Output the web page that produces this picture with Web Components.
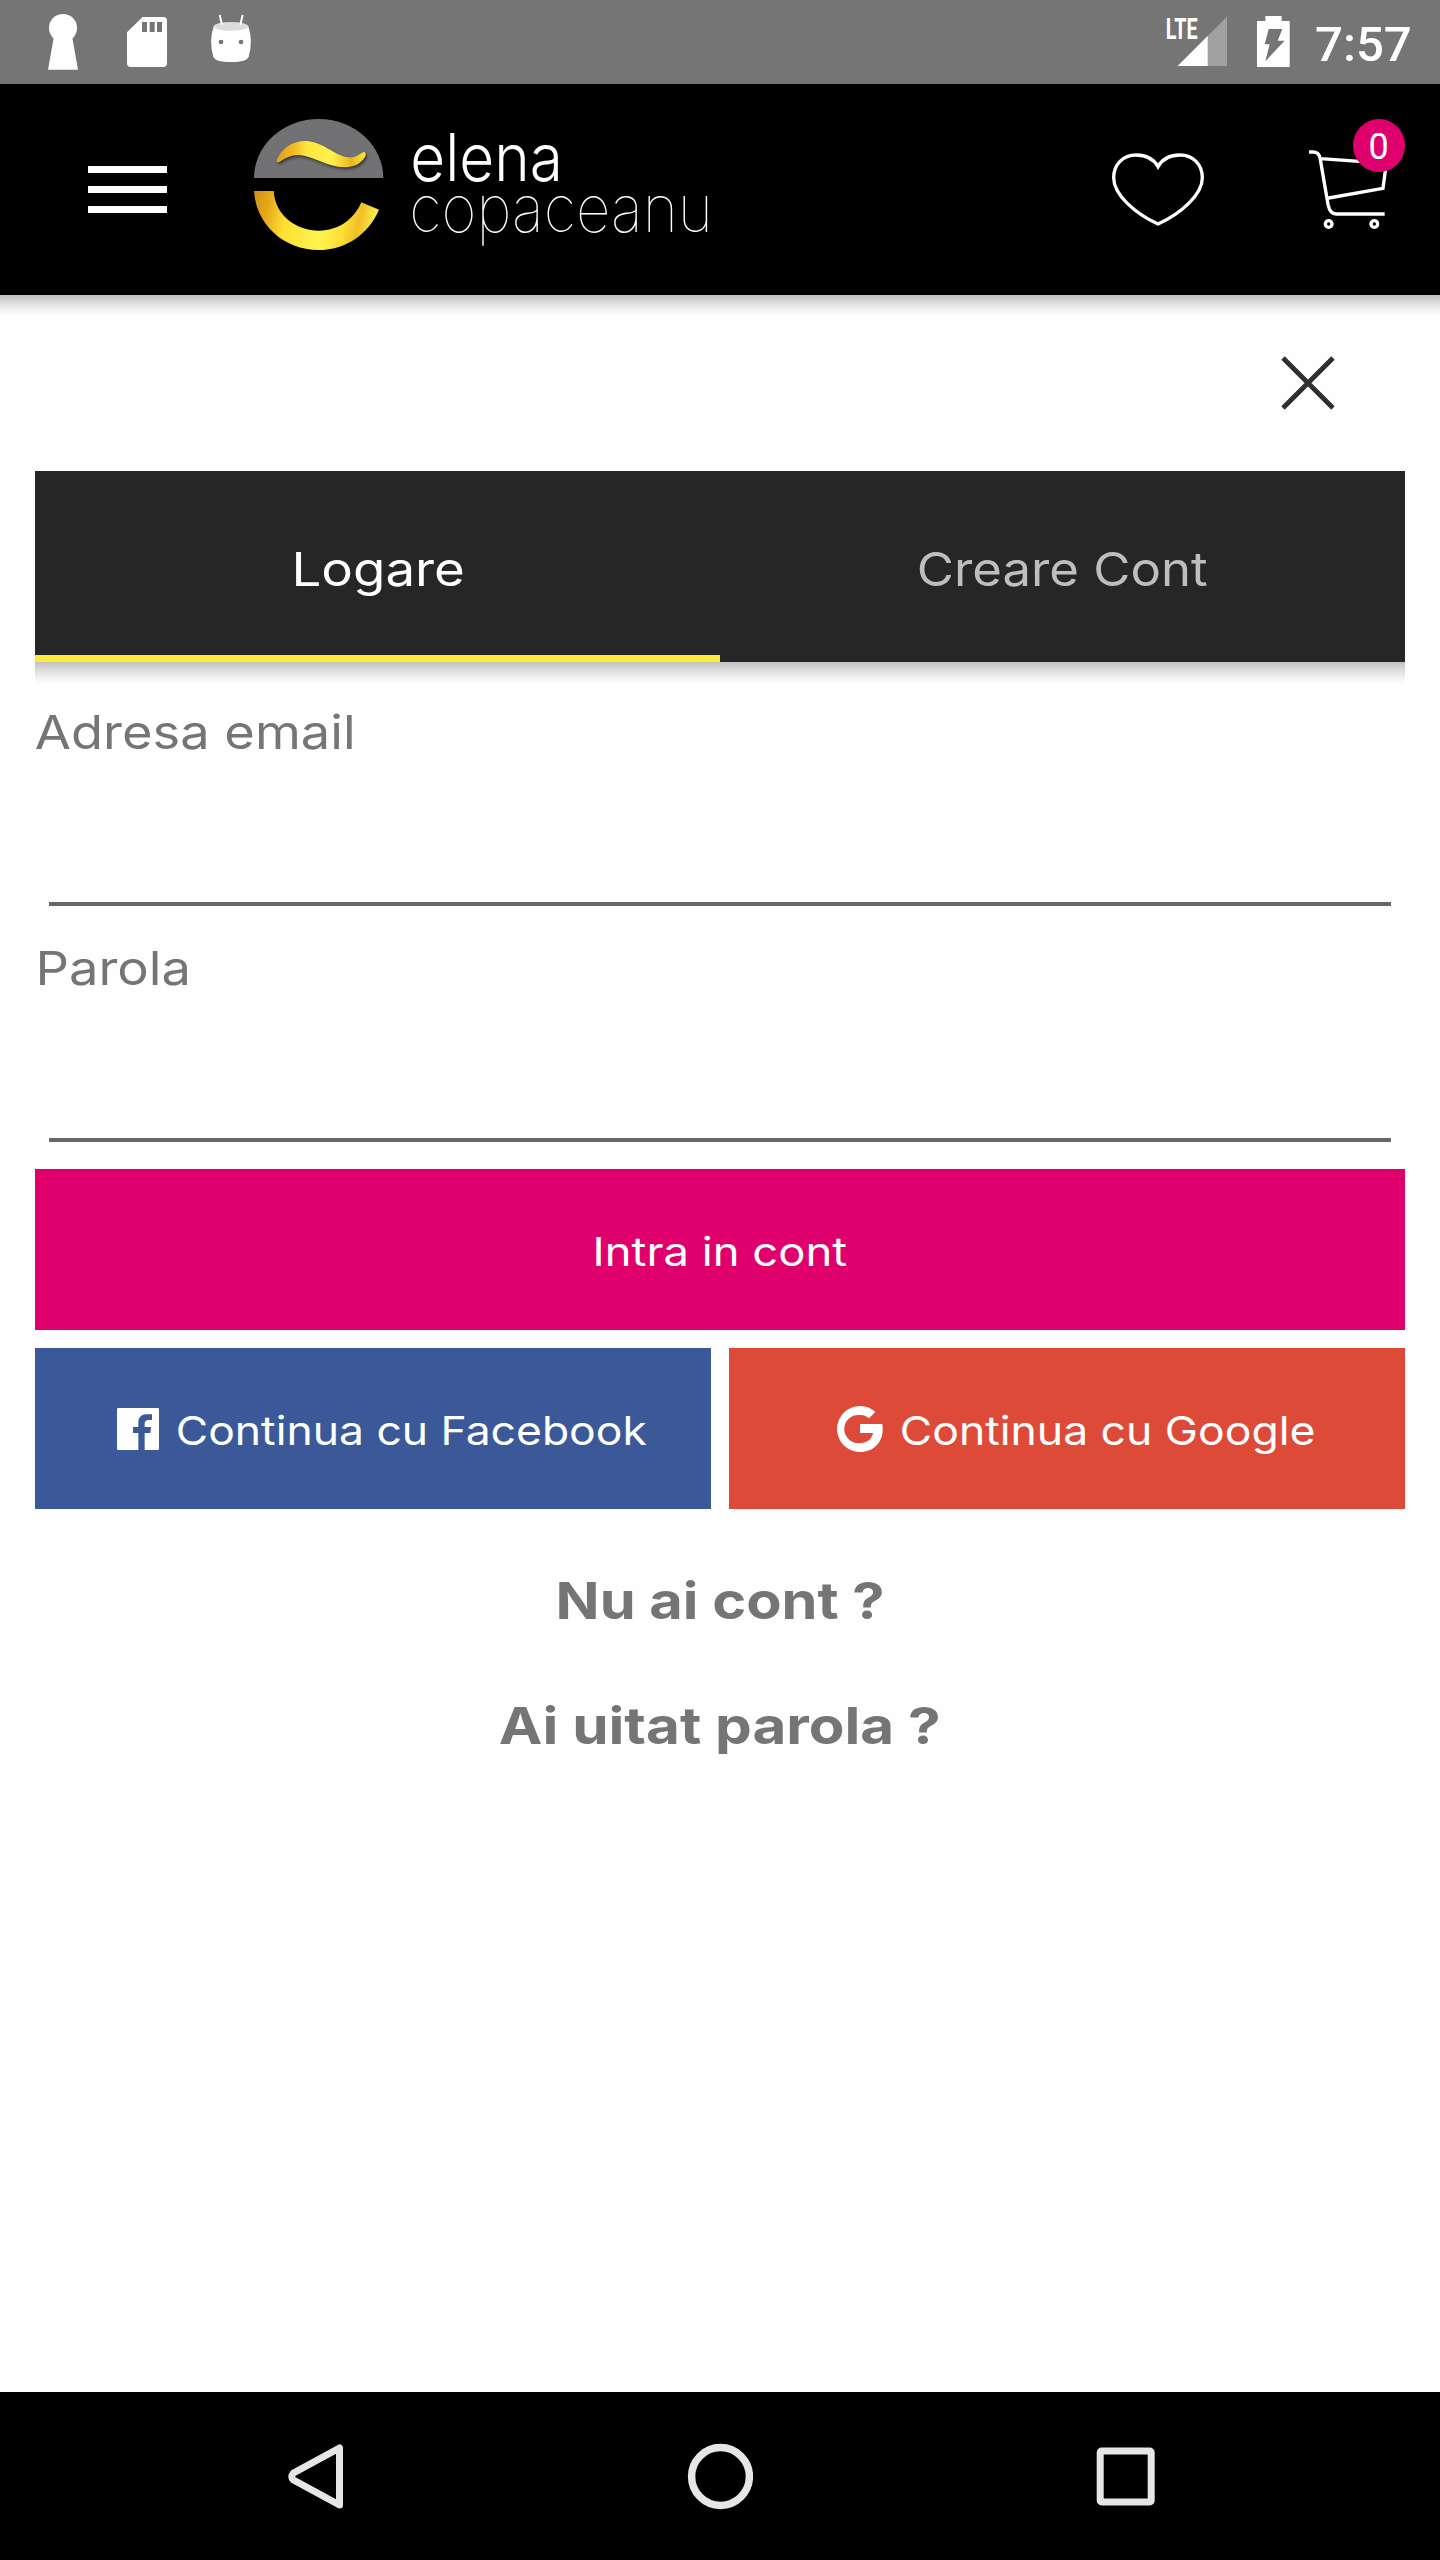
<!DOCTYPE html>
<html lang="ro">
<head>
<meta charset="utf-8">
<title>Elena Copaceanu</title>
<style>
html, body { margin: 0; background: #fefefe; }
body { width: 1440px; height: 2560px; overflow: hidden; font-family: Inter, "Open Sans", sans-serif; }
</style>
</head>
<body>
<shop-app></shop-app>
<script>
const define = (name, html, Base = HTMLElement) => {
  const template = document.createElement('template');
  template.innerHTML = html;
  customElements.define(name, class extends Base {
    connectedCallback() {
      if (this.shadowRoot) return;
      this.attachShadow({ mode: 'open' }).append(template.content.cloneNode(true));
    }
  });
};

/* A line of text whose inked width runs from "from" to "to" in a w x h box. */
class FitText extends HTMLElement {
  connectedCallback() {
    if (this.shadowRoot) return;
    const a = (n, d) => this.hasAttribute(n) ? this.getAttribute(n) : d;
    const size = +a('size', 46), weight = a('weight', 400), family = a('family', 'Inter');
    const from = +a('from', 0), to = +a('to', 100), base = +a('base', 40);
    const text = a('text', '');
    const ctx = document.createElement('canvas').getContext('2d');
    ctx.font = `${weight} ${size}px "${family}", sans-serif`;
    const m = ctx.measureText(text);
    const k = (to - from) / (m.actualBoundingBoxRight + m.actualBoundingBoxLeft);
    const x = from + k * m.actualBoundingBoxLeft;
    this.attachShadow({ mode: 'open' }).innerHTML = `
      <style>:host{display:block;flex:none} svg{display:block;overflow:visible}
      text{font:${weight} ${size}px "${family}",sans-serif;fill:currentColor;white-space:pre}</style>
      <svg width="${a('w', 100)}" height="${a('h', 60)}"><text transform="translate(${x} ${base}) scale(${k} 1)"></text></svg>`;
    this.shadowRoot.querySelector('text').textContent = text;
  }
}
customElements.define('fit-text', FitText);

define('status-bar', `
<style>
:host{display:flex;justify-content:space-between;height:84px;background:#757575;color:#fff}
.right{display:flex}
svg{display:block}
</style>
<svg width="360" height="84" viewBox="0 0 1080 252" fill="#fff">
  <circle cx="189" cy="84" r="42"/><path d="M162 108H216L234 209H144Z"/>
  <path fill-rule="evenodd" d="M428 51H490Q501 51 501 62V190Q501 201 490 201H392Q381 201 381 190V97ZM426 66V96H441V66ZM449 66V96H464V66ZM471 66V96H486V66Z"/>
  <path d="M641 79Q626 125 640 170Q645 186 693 186Q741 186 746 170Q760 125 745 79Z"/>
  <ellipse cx="693" cy="79" rx="52" ry="13" fill="#dcdcdc"/>
  <path d="M659 45L666 74M728 45L721 74" stroke="#fff" stroke-width="6"/>
  <circle cx="663" cy="126" r="7" fill="#757575"/><circle cx="723" cy="126" r="7" fill="#757575"/>
</svg>
<div class="right">
  <fit-text text="LTE" w="42" h="84" from="46.5" to="77.5" base="39" size="29" weight="700" family="Roboto"></fit-text>
  <svg width="148" height="84" viewBox="126 0 444 252" fill="#fff">
    <path d="M173 198L321 50V198Z" opacity=".32"/><path d="M173 198L263 108V198Z"/>
    <path fill-rule="evenodd" d="M436 48H485V63H509V201H411V63H436ZM446 87L434 133H449L436 184L494 122H473L487 87Z"/>
  </svg>
  <fit-text text="7:57" w="130" h="84" from="6" to="100" base="61" size="49" weight="500" family="Roboto"></fit-text>
</div>`);

define('brand-logo', `
<style>:host{display:flex} .name{display:flex;flex-direction:column;color:#fff} svg{display:block}</style>
<svg width="144" height="211" viewBox="558 -18 432 633">
  <defs>
    <linearGradient id="gold" x1="583" y1="320" x2="950" y2="400" gradientUnits="userSpaceOnUse">
      <stop offset="0" stop-color="#cf9216"/><stop offset=".12" stop-color="#e6a81a"/><stop offset=".28" stop-color="#ffe034"/>
      <stop offset=".58" stop-color="#fff350"/><stop offset=".74" stop-color="#ffe036"/><stop offset=".86" stop-color="#efbf28"/><stop offset="1" stop-color="#fff250"/>
    </linearGradient>
    <linearGradient id="wave" x1="650" y1="200" x2="917" y2="200" gradientUnits="userSpaceOnUse">
      <stop offset="0" stop-color="#dea018"/><stop offset=".2" stop-color="#f2bc26"/><stop offset=".34" stop-color="#ffe640"/>
      <stop offset=".62" stop-color="#fff24c"/><stop offset=".84" stop-color="#eab522"/><stop offset="1" stop-color="#ffe63c"/>
    </linearGradient>
    <filter id="soft" x="-20%" y="-40%" width="140%" height="180%"><feGaussianBlur stdDeviation="4"/></filter>
  </defs>
  <path d="M582 264A194 177 0 0 1 970 264Z" fill="#727274"/>
  <path transform="translate(4 6)" filter="url(#soft)" fill="#222" opacity=".75" d="M650 211C664 176 696 152 738 153C793 156 822 197 866 202C890 204 904 187 912 185C918 187 918 194 915 201C901 222 882 231 855 232C797 230 763 198 715 195C691 196 678 203 658 216C652 217 649 215 650 211Z"/>
  <path fill="url(#wave)" d="M650 211C664 176 696 152 738 153C793 156 822 197 866 202C890 204 904 187 912 185C918 187 918 194 915 201C901 222 882 231 855 232C797 230 763 198 715 195C691 196 678 203 658 216C652 217 649 215 650 211Z"/>
  <path fill="url(#gold)" d="M582 303C588 404 672 480 776 480C857 480 925 433 957 359L904 337C882 389 834 422 778 422C706 422 645 374 641 303Z"/>
</svg>
<div class="name">
  <fit-text text="elena" w="330" h="105" from="23" to="168" base="97" size="66" weight="300"></fit-text>
  <fit-text text="copaceanu" w="330" h="106" from="23" to="318" base="43" size="66" weight="100"></fit-text>
</div>`);

define('cart-button', `
<style>
:host{display:block;position:relative;width:140px;height:211px} svg{display:block}
.badge{position:absolute;left:53px;top:35px;width:52px;height:53px;border-radius:50%;background:#df006e;color:#fff}
</style>
<svg width="140" height="211" viewBox="660 -18 420 633" fill="none" stroke="#fff" stroke-width="10">
  <path d="M687 186H699Q716 186 720 203L744 343Q750 372 768 372H914M722 206L919 220L909 295L746 324"/>
  <circle cx="746" cy="402" r="10"/><circle cx="883" cy="402" r="10"/>
</svg>
<div class="badge"><fit-text text="0" w="52" h="53" from="17.5" to="34.5" base="39.5" size="36" weight="400" family="Roboto"></fit-text></div>`);

define('app-header', `
<style>
:host{display:flex;position:relative;z-index:1;height:211px;background:#000}
:host::after{content:"";position:absolute;left:0;right:0;top:100%;height:22px;background:linear-gradient(rgba(0,0,0,.25),rgba(0,0,0,.15) 30%,rgba(0,0,0,.05) 65%,transparent)}
svg{display:block} .menu{margin-left:88px} brand-logo{margin-left:79px} .actions{display:flex;margin-left:auto}
</style>
<svg class="menu" width="79" height="211" fill="#fff"><path d="M0 82h79v7H0zM0 102h79v7H0zM0 122h79v7H0z"/></svg>
<brand-logo></brand-logo>
<div class="actions">
  <svg width="200" height="211" viewBox="60 -18 600 633" fill="none" stroke="#fff" stroke-width="10">
    <path d="M234 230C222 208 198 195 168 195C129 195 101 224 101 263C101 314 166 371 234 402C302 371 367 314 367 263C367 224 339 195 300 195C270 195 246 208 234 230Z"/>
  </svg>
  <cart-button></cart-button>
</div>`);

define('close-row', `
<style>:host{display:flex;justify-content:flex-end;height:176px;padding-right:105px} svg{display:block;margin-top:61px}</style>
<svg width="54" height="54"><path d="M2 2L52 52M52 2L2 52" stroke="#303030" stroke-width="4.8"/></svg>`);

define('auth-tabs', `
<style>
:host{display:flex;position:relative;height:191px;background:#262626}
:host::after{content:"";position:absolute;left:0;right:0;top:100%;height:22px;background:linear-gradient(rgba(0,0,0,.24),rgba(0,0,0,.15) 32%,rgba(0,0,0,.05) 68%,transparent)}
.tab{flex:1;box-sizing:border-box;height:191px}
.active{border-bottom:7px solid #fcea3b;color:#fff} .idle{color:#bebebe}
</style>
<div class="tab active"><fit-text text="Logare" w="685" h="184" from="261" to="427.5" base="115" size="46.5" weight="400"></fit-text></div>
<div class="tab idle"><fit-text text="Creare Cont" w="685" h="184" from="199" to="487.5" base="115" size="46.5" weight="400"></fit-text></div>`);

define('text-field', `
<style>:host{display:flex;flex-direction:column;height:236px;color:#757575} .line{height:3.6px;margin:111px 14px 0;background:#686868}</style>
<slot></slot><div class="line"></div>`);

define('action-button', `
<style>:host{display:flex;flex:1;height:161px;background:var(--fill);color:#fff}</style>
<slot></slot>`);

define('login-form', `
<style>
:host{display:block;padding:0 35px;color:#757575}
.fields{padding-top:29px} .row{display:flex;gap:18px;margin-top:18px}
.submit{display:flex;margin-top:6px} svg{display:block;flex:none}
</style>
<auth-tabs></auth-tabs>
<div class="fields">
  <text-field><fit-text text="Adresa email" w="1370" h="100" from="1" to="317" base="58" size="46.5" weight="400"></fit-text></text-field>
  <text-field><fit-text text="Parola" w="1370" h="100" from="5" to="152.5" base="58" size="46.5" weight="400"></fit-text></text-field>
</div>
<div class="submit"><action-button style="--fill:#df006e"><fit-text text="Intra in cont" w="1370" h="161" from="561" to="812" base="97" size="40" weight="400"></fit-text></action-button></div>
<div class="row">
  <action-button style="--fill:#3b5998">
    <svg width="134" height="161" viewBox="45 24 402 483"><path fill="#fff" fill-rule="evenodd" d="M295 204H413Q417 204 417 208V326Q417 330 413 330H295Q291 330 291 326V208Q291 204 295 204ZM355 330H374V279H391L393 261H374V251Q374 240 386 240H396V223H380C364 223 355 232 355 247V261H339V279H355Z"/></svg>
    <fit-text text="Continua cu Facebook" w="542" h="161" from="9" to="478" base="97" size="40" weight="400"></fit-text>
  </action-button>
  <action-button style="--fill:#dd4b38">
    <svg width="160" height="161"><path transform="translate(131 81)" fill="#fff" d="M0-5H22.3C22.6-3 22.7-1.5 22.7 0C22.7 13.5 13.7 23 0 23A23 23 0 1 1 0-23C6.2-23 11.4-20.8 15.4-17L8.9-10.7C7.3-12.2 4.5-14 0-14A14.1 14.1 0 1 0 0 14C9.5 14 12.4 7.5 13 3.9H0Z"/></svg>
    <fit-text text="Continua cu Google" w="516" h="161" from="13" to="425" base="97" size="40" weight="400"></fit-text>
  </action-button>
</div>
<fit-text text="Nu ai cont ?" w="1370" h="125" from="524" to="848" base="110" size="51" weight="700"></fit-text>
<fit-text text="Ai uitat parola ?" w="1370" h="125" from="465" to="904" base="110" size="51" weight="700"></fit-text>`);

define('nav-bar', `
<style>:host{display:flex;justify-content:space-between;align-items:center;height:168px;padding:0 284px;background:#000} svg{display:block}</style>
<svg width="64" height="168" fill="none" stroke="#e6e6e6" stroke-width="7" stroke-linejoin="round"><path d="M55.5 56V113L9.5 88Q6 85 9.5 81Z"/></svg>
<svg width="66" height="168" fill="none" stroke="#e6e6e6" stroke-width="7.5"><circle cx="33.5" cy="84.5" r="28.9"/></svg>
<svg width="64" height="168" fill="none" stroke="#e6e6e6" stroke-width="7"><rect x="8.2" y="59" width="51" height="51" rx="1.5" stroke-linejoin="round"/></svg>`);

define('shop-app', `
<style>:host{display:flex;flex-direction:column;height:2560px} main{flex:1}</style>
<status-bar></status-bar><app-header></app-header>
<main><close-row></close-row><login-form></login-form></main>
<nav-bar></nav-bar>`);
</script>
</body>
</html>
